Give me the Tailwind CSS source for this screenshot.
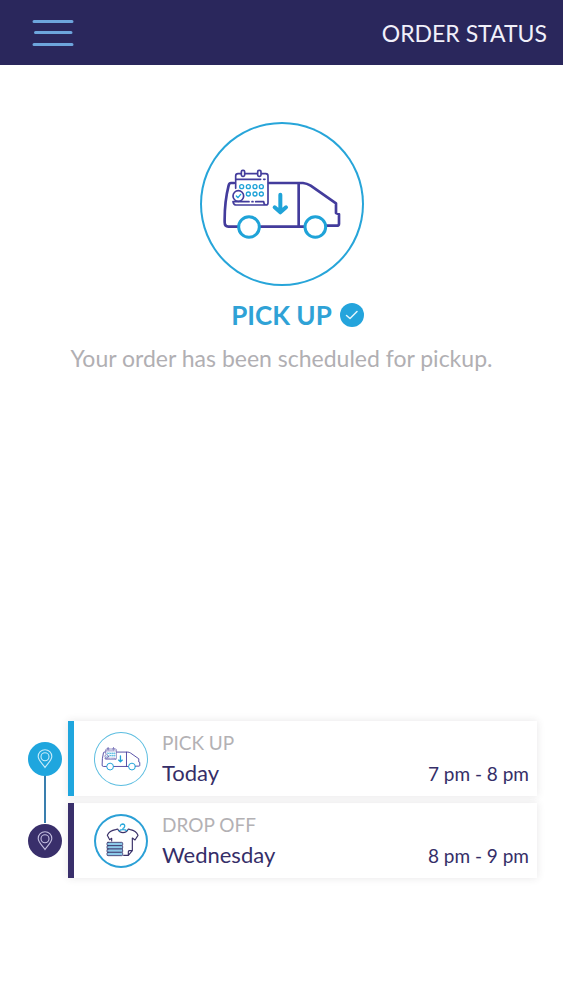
<!DOCTYPE html>
<html lang="en">
<head>
<meta charset="utf-8">
<meta name="viewport" content="width=device-width, initial-scale=1">
<title>Order Status</title>
<script src="https://cdn.jsdelivr.net/npm/@tailwindcss/browser@4"></script>
</head>
<body class="flex min-h-screen flex-col bg-white font-['Lato',sans-serif]">
<svg class="hidden" aria-hidden="true">
  <symbol id="van" viewBox="29 21 492 492">
    <g fill="none" stroke-linecap="round" stroke-linejoin="round">
      <path stroke="#433c9c" stroke-width="8" d="M131 204H122Q117 204 115 211Q102 262 103 322Q103 335 114 335H143M236 204H338Q350 205 361 212L437 265V294L446 298V326Q446 332 439 332H408M210 335H342M325 205V334"/>
      <g stroke="#1fa3d8">
        <circle cx="176" cy="336" r="31" stroke-width="9"/>
        <circle cx="375" cy="336" r="31" stroke-width="9"/>
        <path stroke-width="12" d="M270 239V291M253 277L270 292L287 277"/>
        <g stroke-width="4">
          <circle cx="154" cy="215" r="6"/><circle cx="174" cy="215" r="6"/><circle cx="194" cy="215" r="6"/><circle cx="213" cy="215" r="6"/>
          <circle cx="174" cy="237" r="6"/><circle cx="194" cy="237" r="6"/><circle cx="213" cy="237" r="6"/>
          <path d="M138 243L143 248L151 238"/>
        </g>
      </g>
      <g stroke="#433c9c" stroke-width="5">
        <path d="M136 220V183Q136 176 143 176H151M165 176H200M214 176H226Q233 176 233 183V263Q233 270 226 270H136Q129 269 128 260H176M196 260H220Q221 270 227 270M136 193H211M220 193H224M185 260H188"/>
        <rect x="153" y="166" width="10" height="18" rx="4"/>
        <rect x="202" y="166" width="10" height="18" rx="4"/>
        <circle cx="144" cy="243" r="16"/>
      </g>
    </g>
  </symbol>
  <symbol id="shirt" viewBox="27 24 162 162">
    <g fill="none" stroke-linecap="round" stroke-linejoin="round">
      <path stroke="#3a3168" stroke-width="3.500" d="M80 105V97L74 101L67 88Q73 74 92 71L98 69Q103 80 114 80Q125 80 130 69L136 71Q153 74 159 88L150 102L142 96V134L130 148H116M130 148V137Q130 134 133 134H142"/>
      <path stroke="#2ba9dc" stroke-width="4" d="M106 60Q107 54 113 54Q120 55 119 61Q118 66 114 67V71M103 74Q106 71 114 71Q122 71 125 74"/>
      <g stroke="#3a3168" stroke-width="2.500" fill="#8cc9e8">
        <rect x="66" y="109" width="47" height="10" rx="3"/>
        <rect x="66" y="119" width="47" height="10" rx="3"/>
        <rect x="66" y="129" width="47" height="10" rx="3"/>
        <rect x="66" y="139" width="47" height="10" rx="3"/>
      </g>
    </g>
  </symbol>
  <symbol id="pin" viewBox="0 0 16 20">
    <g fill="none" stroke="currentColor" stroke-width="1.1">
      <path d="M8 18.5C6 15 1.2 11.500 1.200 7.500A6.800 6.800 0 0 1 14.800 7.500C14.800 11.500 10 15 8 18.500Z"/>
      <circle cx="8" cy="7.700" r="4"/>
    </g>
  </symbol>
</svg>

<header class="flex h-[65px] items-center justify-between bg-[#2a275c] pr-4 pl-8">
  <button type="button" aria-label="Open menu" class="text-[#6da5dc]">
    <svg class="h-7 w-[42px]" viewBox="0 0 42 28" fill="none" stroke="currentColor" stroke-width="3" stroke-linecap="round"><path d="M2 2.500H40M3.500 13.500H39M2 25.500H40"/></svg>
  </button>
  <h1 class="text-[23px] leading-8 text-[#f1f0fa]">ORDER STATUS</h1>
</header>

<main class="flex flex-1 flex-col">
  <section class="flex flex-col items-center pt-[57px]">
    <div class="size-[164px] rounded-full inset-ring-2 inset-ring-[#27a5d9]">
      <svg class="size-full" role="img" aria-label="Van with calendar"><use href="#van"/></svg>
    </div>
    <div class="mt-[11px] flex items-center gap-2 pl-8">
      <h2 class="text-[26px] leading-9 font-bold text-[#2fa2d6]">PICK UP</h2>
      <svg class="size-6" viewBox="0 0 24 24" role="img" aria-label="Done"><circle cx="12" cy="12" r="12" fill="#24a4dc"/><path d="M6.500 12.500L10 15.500L17 8.500" fill="none" stroke="#e6f6fd" stroke-width="1.500" stroke-linecap="round" stroke-linejoin="round"/></svg>
    </div>
    <p class="mt-[9px] text-center text-[23px] leading-8 text-[#b1afb3]">Your order has been scheduled for pickup.</p>
  </section>

  <ol class="mt-auto flex flex-col gap-[7px] pr-[26px] pb-[122px] pl-7">
    <li class="relative flex items-center gap-[6px]">
      <span class="absolute top-[54px] left-4 h-12 w-[2px] bg-[#3a7fae]"></span>
      <span class="relative flex size-[34px] shrink-0 items-center justify-center rounded-full bg-[#1fa6de] text-[#c9ecfa]"><svg class="h-5 w-4" aria-hidden="true"><use href="#pin"/></svg></span>
      <div class="flex h-[75px] flex-1 items-center border-l-[6px] border-[#1fa6de] bg-white pr-2 pl-5 shadow-[0_0_8px_rgba(60,50,60,0.12)]">
        <div class="size-[54px] shrink-0 rounded-full inset-ring-1 inset-ring-[#5bbde0]"><svg class="size-full" aria-hidden="true"><use href="#van"/></svg></div>
        <div class="ml-[14px] flex-1 pt-[2px]">
          <h3 class="text-[19px] leading-7 text-[#b3b1b4]">PICK UP</h3>
          <div class="flex items-baseline justify-between text-[#352e68]"><p class="text-[22px] leading-8">Today</p><p class="text-[19px] leading-8">7 pm - 8 pm</p></div>
        </div>
      </div>
    </li>
    <li class="flex items-center gap-[6px]">
      <span class="relative flex size-[34px] shrink-0 items-center justify-center rounded-full bg-[#392f6b] text-[#c4bfe0]"><svg class="h-5 w-4" aria-hidden="true"><use href="#pin"/></svg></span>
      <div class="flex h-[75px] flex-1 items-center border-l-[6px] border-[#392f6b] bg-white pr-2 pl-5 shadow-[0_0_8px_rgba(60,50,60,0.12)]">
        <div class="size-[54px] shrink-0 rounded-full inset-ring-2 inset-ring-[#2ba0d6]"><svg class="size-full" aria-hidden="true"><use href="#shirt"/></svg></div>
        <div class="ml-[14px] flex-1 pt-[2px]">
          <h3 class="text-[19px] leading-7 text-[#b3b1b4]">DROP OFF</h3>
          <div class="flex items-baseline justify-between text-[#352e68]"><p class="text-[22px] leading-8">Wednesday</p><p class="text-[19px] leading-8">8 pm - 9 pm</p></div>
        </div>
      </div>
    </li>
  </ol>
</main>
</body>
</html>
